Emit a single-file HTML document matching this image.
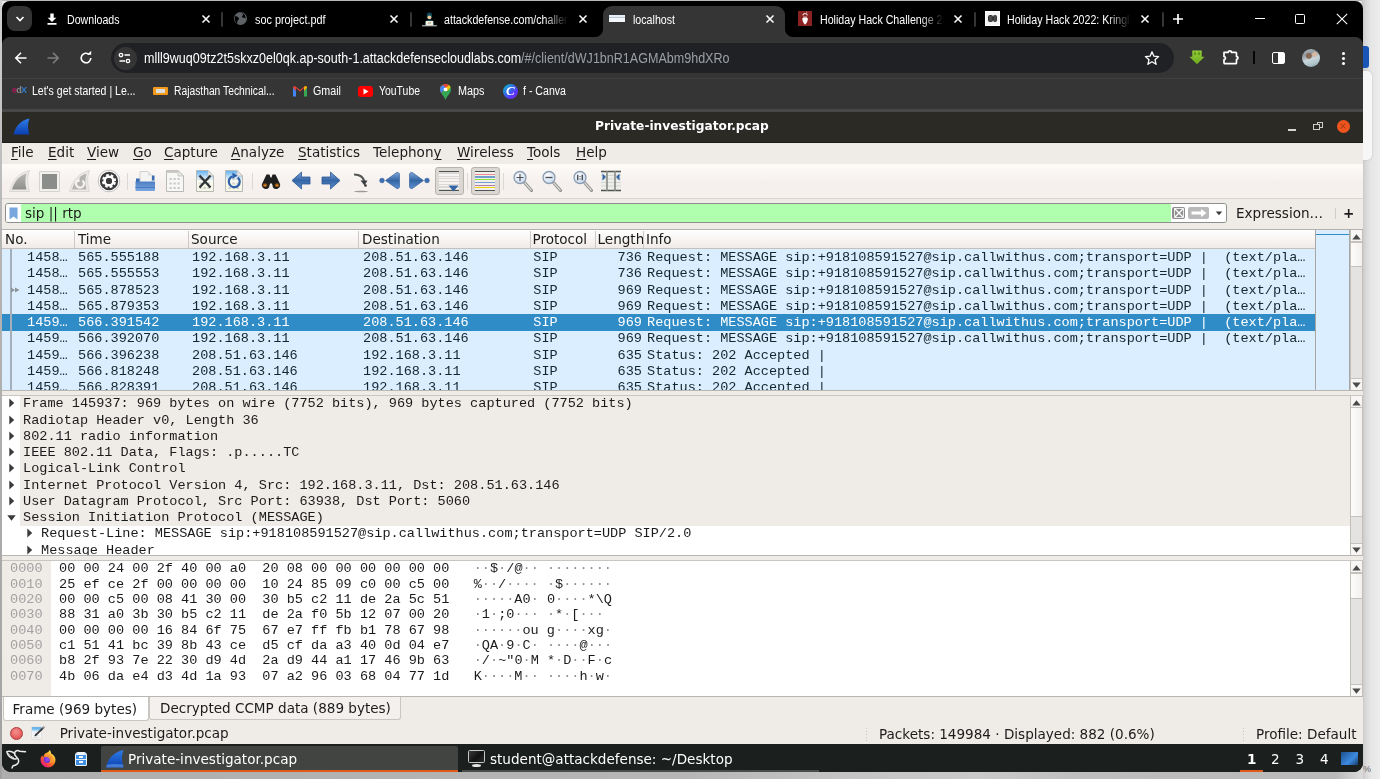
<!DOCTYPE html><html><head><meta charset="utf-8"><title>Private-investigator.pcap</title><style>
*{box-sizing:border-box;margin:0;padding:0}
html,body{width:1380px;height:779px;overflow:hidden}
body{background:#e9e9e9;font-family:"Liberation Sans",sans-serif;position:relative}
.a{position:absolute}
.t{position:absolute;white-space:pre;line-height:1}
#win{will-change:transform;left:2px;top:1px;width:1361px;height:771px;background:#000;border-radius:8px 8px 9px 9px;overflow:hidden}
.ct{font-family:"Liberation Sans",sans-serif;font-size:12px;color:#fff}
.dv{font-family:"DejaVu Sans",sans-serif;color:#1b1b1b}
.mono{font-family:"Liberation Mono",monospace;font-size:13.56px}
u{text-decoration:underline;text-underline-offset:2px;text-decoration-thickness:1px}
</style></head><body>
<div class="a" style="left:0;top:0;width:1380px;height:1px;background:#b9b9b9"></div>
<div class="a" style="left:1362px;top:0;width:18px;height:779px;background:linear-gradient(90deg,#c6c6c6 0,#d9d9d9 4px,#e6e6e6 9px,#ececec 18px)"></div>
<div class="a" style="left:1362px;top:46px;width:7px;height:22px;background:#1a56b8;border-radius:0 3px 3px 0"></div>
<div class="a" style="left:1362px;top:71px;width:10px;height:89px;background:#f7f7f7;border-radius:0 5px 5px 0;box-shadow:0 0 2px #bbb"></div>
<div class="a" style="left:0;top:760px;width:1363px;height:19px;background:linear-gradient(90deg,#aeaeae 0,#b6b6b6 50%,#c4c4c4 62%,#c9c9c9 72%,#bdbdbd 80%,#b9b9b9 98%,#dcdcdc 100%)"></div>
<div class="t" style="left:1363px;top:765px;font-size:9px;color:#6a6a6a">%</div>
<div class="a" style="left:0;top:0;width:2px;height:779px;background:linear-gradient(180deg,#d2d2d2,#b5b5b5 30%,#a2a2a2)"></div>
<div class="a" id="win">
<div class="a" style="left:0px;top:36px;width:1361px;height:72px;background:#353535"></div>
<div class="a" style="left:601px;top:5px;width:182px;height:32px;background:#353535;border-radius:9px 9px 0 0"></div>
<div class="a" style="left:593px;top:28px;width:8px;height:8px;background:radial-gradient(circle at 0 0,#000 7.5px,#353535 8.5px)"></div>
<div class="a" style="left:783px;top:28px;width:8px;height:8px;background:radial-gradient(circle at 100% 0,#000 7.5px,#353535 8.5px)"></div>
<div class="a" style="left:1353px;top:36px;width:8px;height:8px;background:radial-gradient(circle at 0 100%,#353535 7.5px,#000 8.5px)"></div>
<div class="a" style="left:0px;top:36px;width:8px;height:8px;background:radial-gradient(circle at 100% 100%,#353535 7.5px,#000 8.5px)"></div>
<div class="a" style="left:5.4px;top:5.2px;width:24.6px;height:24.6px;background:#343434;border-radius:8px"></div>
<svg class="a" style="left:12px;top:13px" width="12" height="10" viewBox="0 0 12 10"><path d="M2.5 3 L6 6.5 L9.5 3" fill="none" stroke="#fff" stroke-width="1.6"/></svg>
<svg class="a" style="left:44px;top:11px" width="12" height="14" viewBox="0 0 12 14"><path d="M4.3 1.5h3.4v4.2h2.6L6 10 1.7 5.7h2.6z M1.5 11h9v1.8h-9z" fill="#fff"/></svg>
<div class="t ct" style="left:64.5px;top:12.6px;transform:scaleX(0.8842);transform-origin:0 0;">Downloads</div>
<svg class="a" style="left:199px;top:13px" width="10" height="10" viewBox="0 0 10 10"><path d="M1.5 1.5 L8.5 8.5 M8.5 1.5 L1.5 8.5" stroke="#fff" stroke-width="1.5" fill="none"/></svg>
<div class="a" style="left:219.3px;top:11px;width:2px;height:14.5px;background:#353535;border-radius:1px"></div>
<svg class="a" style="left:231px;top:10px" width="15" height="15" viewBox="0 0 15 15"><circle cx="7.5" cy="7.5" r="6.500" fill="#5f6368"/><path d="M2 5.5c1.5-.5 2.5.3 3.5 1.2s.2 2.3-.8 2.8.3 2.5-.6 3.2C2.500 11.500 1.300 8.500 2 5.500zM7 1.500c1 .8 2.600.5 3 1.800s-1.500 1.500-1 2.700 2.800.4 3.600 1.500c.3-2.800-2-6-5.600-6z" fill="#000"/></svg>
<div class="t ct" style="left:253px;top:12.6px;transform:scaleX(0.9033);transform-origin:0 0;">soc project.pdf</div>
<svg class="a" style="left:387px;top:13px" width="10" height="10" viewBox="0 0 10 10"><path d="M1.5 1.5 L8.5 8.5 M8.5 1.5 L1.5 8.5" stroke="#fff" stroke-width="1.5" fill="none"/></svg>
<div class="a" style="left:408.3px;top:11px;width:2px;height:14.5px;background:#353535;border-radius:1px"></div>
<svg class="a" style="left:419px;top:10px" width="17" height="16" viewBox="0 0 17 16"><path d="M3.800 14.500c0-4 1.500-6 4.700-6s4.700 2 4.700 6z" fill="#0e3f50"/><ellipse cx="8.400" cy="4.800" rx="2.700" ry="3.200" fill="#0e4a5c"/><circle cx="8.400" cy="6.300" r="1.900" fill="#f2c796"/><rect x="4.700" y="10" width="7.500" height="4.600" fill="#f6f1dd"/><rect x="7" y="11.500" width="3" height="1" fill="#9a9a8a"/><rect x="1" y="14.300" width="14.800" height="1" fill="#cfd2d4"/></svg>
<div class="a" style="left:441.5px;top:12.6px;width:127px;height:14px;overflow:hidden;-webkit-mask-image:linear-gradient(90deg,#000 100px,transparent 124px);mask-image:linear-gradient(90deg,#000 100px,transparent 124px)"><div class="t ct" style="left:0;top:0;transform:scaleX(.887);transform-origin:0 0">attackdefense.com/challenge</div></div>
<svg class="a" style="left:576px;top:13px" width="10" height="10" viewBox="0 0 10 10"><path d="M1.5 1.5 L8.5 8.5 M8.5 1.5 L1.5 8.5" stroke="#fff" stroke-width="1.5" fill="none"/></svg>
<div class="a" style="left:607px;top:14px;width:16px;height:7px;background:linear-gradient(180deg,#e8eef5 0 2px,#b9c7d6 2px 3px,#f4f7fa 3px)"></div>
<div class="t ct" style="left:630.5px;top:12.6px;transform:scaleX(0.8865);transform-origin:0 0;">localhost</div>
<svg class="a" style="left:763px;top:13px" width="10" height="10" viewBox="0 0 10 10"><path d="M1.5 1.5 L8.5 8.5 M8.5 1.5 L1.5 8.5" stroke="#fff" stroke-width="1.5" fill="none"/></svg>
<div class="a" style="left:796px;top:10.4px;width:14.2px;height:14.6px;background:#8a2222"></div>
<svg class="a" style="left:796px;top:10.4px" width="14.2" height="14.6" viewBox="0 0 14 15"><path d="M4.200 8c0-.8 1.300-1.200 2.800-1.200s2.800.4 2.800 1.200c0 2.600-1.300 4.800-2.800 6.200-1.500-1.400-2.800-3.600-2.800-6.200z" fill="#fff"/><path d="M4.600 4.600c.3-1.300 1.200-2 2.400-2s2.100.7 2.400 2" stroke="#f1dcdc" stroke-width="1.100" fill="none"/><path d="M5 6.200h4" stroke="#e8cfcf" stroke-width=".9"/><circle cx="8.600" cy="1" r=".6" fill="#e8cfcf"/></svg>
<div class="a" style="left:817.5px;top:12.6px;width:127px;height:14px;overflow:hidden;-webkit-mask-image:linear-gradient(90deg,#000 100px,transparent 124px);mask-image:linear-gradient(90deg,#000 100px,transparent 124px)"><div class="t ct" style="left:0;top:0;transform:scaleX(.887);transform-origin:0 0">Holiday Hack Challenge 2022</div></div>
<svg class="a" style="left:951px;top:13px" width="10" height="10" viewBox="0 0 10 10"><path d="M1.5 1.5 L8.5 8.5 M8.5 1.5 L1.5 8.5" stroke="#fff" stroke-width="1.5" fill="none"/></svg>
<div class="a" style="left:972.3px;top:11px;width:2px;height:14.5px;background:#353535;border-radius:1px"></div>
<div class="a" style="left:983.2px;top:10.2px;width:15px;height:15px;background:#f4f4f4;border:1px solid #fff"></div>
<div class="a" style="left:986px;top:14px;width:4.6px;height:6.5px;background:#4a4a4a;border-radius:1.500px;border:1px solid #333"></div>
<div class="a" style="left:990.5px;top:14px;width:4.6px;height:6.5px;background:#4a4a4a;border-radius:1.500px;border:1px solid #333"></div>
<div class="a" style="left:1005px;top:12.6px;width:127px;height:14px;overflow:hidden;-webkit-mask-image:linear-gradient(90deg,#000 100px,transparent 124px);mask-image:linear-gradient(90deg,#000 100px,transparent 124px)"><div class="t ct" style="left:0;top:0;transform:scaleX(.887);transform-origin:0 0">Holiday Hack 2022: KringleCon</div></div>
<svg class="a" style="left:1138px;top:13px" width="10" height="10" viewBox="0 0 10 10"><path d="M1.5 1.5 L8.5 8.5 M8.5 1.5 L1.5 8.5" stroke="#fff" stroke-width="1.5" fill="none"/></svg>
<div class="a" style="left:1160.3px;top:11px;width:2px;height:14.5px;background:#353535;border-radius:1px"></div>
<svg class="a" style="left:1170px;top:12px" width="12" height="12" viewBox="0 0 12 12"><path d="M6 1v10M1 6h10" stroke="#fff" stroke-width="1.7"/></svg>
<div class="a" style="left:1253px;top:17px;width:10px;height:1px;background:#fff"></div>
<div class="a" style="left:1293px;top:13px;width:10px;height:10px;border:1px solid #fff;border-radius:1.5px"></div>
<svg class="a" style="left:1334px;top:12px" width="12" height="12" viewBox="0 0 12 12"><path d="M.8.8 11.200 11.200M11.200.8.8 11.200" stroke="#fff" stroke-width="1.100"/></svg>
<svg class="a" style="left:12px;top:50px" width="14" height="14" viewBox="0 0 14 14"><path d="M12.500 7H2M7 1.800 1.800 7 7 12.200" stroke="#fff" stroke-width="1.600" fill="none"/></svg>
<svg class="a" style="left:44px;top:50px" width="14" height="14" viewBox="0 0 14 14"><path d="M1.500 7H12M7 1.800 12.200 7 7 12.200" stroke="#7d7d7d" stroke-width="1.600" fill="none"/></svg>
<svg class="a" style="left:77px;top:50px" width="14" height="14" viewBox="0 0 14 14"><path d="M11.800 7A4.800 4.800 0 1 1 10.300 3.500" stroke="#fff" stroke-width="1.600" fill="none"/><path d="M8 3.800h4.200V-.2z" fill="#fff"/></svg>
<div class="a" style="left:108.5px;top:42px;width:1063px;height:30px;background:#202124;border-radius:15px"></div>
<div class="a" style="left:111.5px;top:45.5px;width:23px;height:23px;background:#353535;border-radius:12px"></div>
<svg class="a" style="left:116px;top:51px" width="14" height="12" viewBox="0 0 14 12"><circle cx="3" cy="3" r="1.700" fill="none" stroke="#fff" stroke-width="1.300"/><path d="M6.500 3H12" stroke="#fff" stroke-width="1.400"/><circle cx="10" cy="9" r="1.700" fill="none" stroke="#fff" stroke-width="1.300"/><path d="M1.500 9H7" stroke="#fff" stroke-width="1.400"/></svg>
<div class="t ct" style="left:141.5px;top:49.6px;font-size:14px;transform:scaleX(0.8957);transform-origin:0 0;">mlll9wuq09tz2t5skxz0el0qk.ap-south-1.attackdefensecloudlabs.com<span style="color:#9aa0a6">/#/client/dWJ1bnR1AGMAbm9hdXRo</span></div>
<svg class="a" style="left:1142px;top:49px" width="16" height="16" viewBox="0 0 16 16"><path d="M8 1.800 9.900 6.200 14.600 6.600 11 9.700 12.100 14.300 8 11.800 3.900 14.300 5 9.700 1.400 6.600 6.100 6.200z" fill="none" stroke="#fff" stroke-width="1.300" stroke-linejoin="round"/></svg>
<svg class="a" style="left:1187px;top:49px" width="16" height="15" viewBox="0 0 16 15"><defs><linearGradient id="gdl" x1="0" y1="0" x2="0" y2="1"><stop offset="0" stop-color="#9bd23c"/><stop offset="1" stop-color="#6aa81c"/></linearGradient></defs><path d="M3.300 .5h9.400v6.300h2.800L8 14.300 .5 6.800h2.800z" fill="url(#gdl)"/><path d="M5.200 1.800h1.600v1.600h1L6 5.400 4.200 3.400h1zM9.200 1.800h1.600v1.600h1L10 5.400 8.200 3.400h1z" fill="#4f8a10" opacity=".8"/></svg>
<svg class="a" style="left:1219px;top:47px" width="19" height="18" viewBox="0 0 19 18"><path d="M3 4.300h4.300c-.3-1.800 3.400-1.800 3.100 0H14.500a1 1 0 0 1 1 1v3.300c1.900-.3 1.900 3 0 2.700v3.400a1 1 0 0 1-1 1H4a1 1 0 0 1-1-1v-3.200c1.900.3 1.900-3.100 0-2.800z" fill="none" stroke="#fff" stroke-width="1.700" stroke-linejoin="round"/></svg>
<div class="a" style="left:1250.6px;top:50px;width:2px;height:13px;background:#050505"></div>
<div class="a" style="left:1269.7px;top:50.5px;width:13.5px;height:12.7px;border:1.500px solid #fff;border-radius:2px;background:linear-gradient(90deg,transparent 0 5.200px,#fff 5.200px)"></div>
<div class="a" style="left:1300px;top:48px;width:18px;height:18px;border-radius:9px;background:radial-gradient(circle at 38% 38%,#8a6a55 0 2.500px,transparent 3.500px),radial-gradient(circle at 70% 30%,#d8b8a0 0 2px,transparent 3px),linear-gradient(160deg,#b9c3c9 0,#8f9aa0 30%,#c9d6dc 55%,#a7c0c4 80%,#6f8286 100%)"></div>
<div class="a" style="left:1339.5px;top:50.7px;width:3px;height:3px;background:#fff;border-radius:50%"></div>
<div class="a" style="left:1339.5px;top:55.7px;width:3px;height:3px;background:#fff;border-radius:50%"></div>
<div class="a" style="left:1339.5px;top:60.7px;width:3px;height:3px;background:#fff;border-radius:50%"></div>
<div class="a" style="left:0px;top:77px;width:1361px;height:1px;background:#404040"></div>
<div class="t ct" style="left:10px;top:85px;font-size:9px;font-weight:bold;letter-spacing:-0.8px"><span style="color:#b0155a">e</span><span style="color:#8a8a8a">d</span><span style="color:#2d7fd3">X</span></div>
<div class="t ct" style="left:30px;top:83.5px;transform:scaleX(0.8760);transform-origin:0 0;">Let's get started | Le...</div>
<div class="a" style="left:151px;top:86px;width:15px;height:8px;background:#f39a1d;border-radius:1px"></div>
<div class="a" style="left:154px;top:88px;width:9px;height:4px;background:#ddd"></div>
<div class="t ct" style="left:171.5px;top:83.5px;transform:scaleX(0.8576);transform-origin:0 0;">Rajasthan Technical...</div>
<svg class="a" style="left:291px;top:85px" width="14" height="11" viewBox="0 0 14 11"><path d="M0 1.500v9h3V5L0 1.500z" fill="#4285f4"/><path d="M14 1.500v9h-3V5z" fill="#34a853"/><path d="M0 1.500 3 5V2L7 5.500 11 2v3l3-3.500C14 .3 12.500-.3 11.500.5L7 4 2.500.5C1.500-.3 0 .3 0 1.500z" fill="#ea4335"/><path d="M11 2v3l3-3.500c0-1.200-1.500-1.800-2.500-1z" fill="#fbbc04"/></svg>
<div class="t ct" style="left:310.5px;top:83.5px;transform:scaleX(0.8933);transform-origin:0 0;">Gmail</div>
<div class="a" style="left:356px;top:85px;width:15px;height:11px;background:#f00;border-radius:3px"></div>
<svg class="a" style="left:361px;top:87px" width="6" height="7" viewBox="0 0 6 7"><path d="M.5.500 5.500 3.500.5 6.500z" fill="#fff"/></svg>
<div class="t ct" style="left:376.5px;top:83.5px;transform:scaleX(0.8694);transform-origin:0 0;">YouTube</div>
<svg class="a" style="left:438px;top:83px" width="11" height="16" viewBox="0 0 11 16"><path d="M5.500 0C2.500 0 0 2.400 0 5.400c0 3.800 4 6 5.500 10.600C7 11.400 11 9.200 11 5.400 11 2.400 8.500 0 5.500 0z" fill="#34a853"/><path d="M5.500 0C2.500 0 0 2.400 0 5.400c0 1.300.5 2.400 1.200 3.400L8.800 1A5.500 5.500 0 0 0 5.500 0z" fill="#ea4335"/><path d="M1.200 8.800 5.500 4.200 3.500 1 .9 2.600C.3 3.400 0 4.400 0 5.400c0 1.300.5 2.400 1.200 3.400z" fill="#4285f4"/><path d="M8.800 1 5.500 4.300l2 2.700 3-3.600C10.300 2.400 9.700 1.600 8.800 1z" fill="#fbbc04"/><circle cx="5.500" cy="5.400" r="1.900" fill="#fff"/></svg>
<div class="t ct" style="left:455.5px;top:83.5px;transform:scaleX(0.9031);transform-origin:0 0;">Maps</div>
<div class="a" style="left:501px;top:83px;width:15px;height:15px;border-radius:8px;background:linear-gradient(135deg,#00c4cc,#5a32fa 70%,#7d2ae8)"></div>
<div class="t ct" style="left:504px;top:83px;font-family:Liberation Serif,serif;font-style:italic;font-size:13px;font-weight:bold">C</div>
<div class="t ct" style="left:520.5px;top:83.5px;transform:scaleX(0.8832);transform-origin:0 0;">f - Canva</div>
<div class="a" style="left:0px;top:108px;width:1361px;height:3px;background:#484848"></div>
<div class="a" style="left:0px;top:111px;width:1361px;height:31px;background:#2b2a25;border-bottom:1px solid #1b1b18"></div>
<svg class="a" style="left:10px;top:116px" width="20" height="20" viewBox="0 0 20 20"><defs><linearGradient id="fin" x1="0" y1="0" x2="0" y2="1"><stop offset="0" stop-color="#2f7de8"/><stop offset="1" stop-color="#0a3fb0"/></linearGradient></defs><path d="M1.500 17.500C3.500 9 9 3 17.500 1.500 15.500 6 15.500 12 17.500 17.500z" fill="url(#fin)"/></svg>
<div class="t dv" style="left:593px;top:119px;font-weight:bold;font-size:12.2px;color:#fff">Private-investigator.pcap</div>
<div class="a" style="left:1286px;top:128.2px;width:7.5px;height:1.5px;background:#d6d6ce"></div>
<div class="a" style="left:1314.5px;top:120.8px;width:6.2px;height:6px;border:1.200px solid #cfcfc7"></div>
<div class="a" style="left:1311px;top:123px;width:7px;height:6.3px;border:1.200px solid #cfcfc7;background:#2b2a25"></div>
<div class="a" style="left:1335px;top:118.5px;width:13px;height:13px;background:#f0541e;border-radius:7px"></div>
<svg class="a" style="left:1338px;top:122px" width="6" height="6" viewBox="0 0 6 6"><path d="M.7.700 5.300 5.300M5.300.7.700 5.300" stroke="#b3400f" stroke-width="1.100"/></svg>
<div class="a" style="left:0px;top:142px;width:1361px;height:21px;background:#efebe7"></div>
<div class="t dv" style="left:9px;top:145.3px;font-size:13.56px"><u>F</u>ile</div>
<div class="t dv" style="left:46px;top:145.3px;font-size:13.56px"><u>E</u>dit</div>
<div class="t dv" style="left:85px;top:145.3px;font-size:13.56px"><u>V</u>iew</div>
<div class="t dv" style="left:131px;top:145.3px;font-size:13.56px"><u>G</u>o</div>
<div class="t dv" style="left:162px;top:145.3px;font-size:13.56px"><u>C</u>apture</div>
<div class="t dv" style="left:229px;top:145.3px;font-size:13.56px"><u>A</u>nalyze</div>
<div class="t dv" style="left:296px;top:145.3px;font-size:13.56px"><u>S</u>tatistics</div>
<div class="t dv" style="left:371px;top:145.3px;font-size:13.56px">Telephon<u>y</u></div>
<div class="t dv" style="left:455px;top:145.3px;font-size:13.56px"><u>W</u>ireless</div>
<div class="t dv" style="left:525px;top:145.3px;font-size:13.56px"><u>T</u>ools</div>
<div class="t dv" style="left:574px;top:145.3px;font-size:13.56px"><u>H</u>elp</div>
<div class="a" style="left:0px;top:162.8px;width:1361px;height:34.5px;background:linear-gradient(180deg,#fdfaf8 0,#f7f3f0 45%,#f5efee 55%,#f6f0ef 100%)"></div>
<div class="a" style="left:0px;top:197px;width:1361px;height:1px;background:#d9d5d1"></div>
<div class="a" style="left:0px;top:198px;width:1361px;height:30px;background:#efebe7"></div>
<svg class="a" width="0" height="0"><defs><linearGradient id="gfin" x1="0" y1="0" x2="0" y2="1"><stop offset="0" stop-color="#b9b8b5"/><stop offset="1" stop-color="#8e8e8b"/></linearGradient><linearGradient id="gblue" x1="0" y1="0" x2="0" y2="1"><stop offset="0" stop-color="#7fa6d8"/><stop offset=".5" stop-color="#3465a4"/><stop offset="1" stop-color="#5e8fd0"/></linearGradient><linearGradient id="gfold" x1="0" y1="0" x2="0" y2="1"><stop offset="0" stop-color="#4d7ec4"/><stop offset="1" stop-color="#7aa5e0"/></linearGradient><linearGradient id="gdoc" x1="0" y1="0" x2="0" y2="1"><stop offset="0" stop-color="#5fb0f0"/><stop offset=".35" stop-color="#cfe6f8"/><stop offset=".5" stop-color="#fbfbf0"/><stop offset="1" stop-color="#f6f6e6"/></linearGradient><radialGradient id="glens" cx=".4" cy=".35" r=".7"><stop offset="0" stop-color="#fff"/><stop offset="1" stop-color="#c5d8ee"/></radialGradient></defs></svg>
<svg class="a" style="left:6px;top:168px" width="23" height="24" viewBox="0 0 23 24"><path d="M1.500 22.500C4.500 11 11 4 21.500 1.500 19 8 19 15 21.500 22.500z" fill="#ece9e6" stroke="#dbd8d4" stroke-width="1"/><path d="M4 20.500C6.500 12 11.500 6.500 18.500 4.500 17 10 17 15 18.500 20.500z" fill="url(#gfin)"/></svg>
<div class="a" style="left:37px;top:170px;width:21px;height:21px;background:#f3f1ee;border:1px solid #d6d3cf;border-radius:1px"></div>
<div class="a" style="left:40px;top:173px;width:15px;height:15px;background:#8b8d8a"></div>
<svg class="a" style="left:66px;top:168px" width="23" height="24" viewBox="0 0 23 24"><path d="M1.500 22.500C4.500 11 11 4 21.500 1.500 19 8 19 15 21.500 22.500z" fill="#ece9e6" stroke="#dbd8d4" stroke-width="1"/><path d="M4 20.500C6.500 12 11.500 6.500 18.500 4.500 17 10 17 15 18.500 20.500z" fill="#b5b4b0"/><path d="M14.500 11.500A4 4 0 1 1 10 11.200" fill="none" stroke="#f4f3f1" stroke-width="2.200"/><path d="M11.500 8v5h-4z" fill="#f4f3f1"/></svg>
<svg class="a" style="left:95px;top:168px" width="24" height="24" viewBox="0 0 24 24"><circle cx="12" cy="12" r="10.800" fill="#fdfdfd" stroke="#c2c2c2" stroke-width="1"/><circle cx="12" cy="12" r="9.200" fill="#3c3c3c"/><circle cx="12" cy="12" r="6" fill="none" stroke="#fff" stroke-width="2.200" stroke-dasharray="2.600 2.112" transform="rotate(11 12 12)"/><circle cx="12" cy="12" r="4.300" fill="none" stroke="#fff" stroke-width="2.600"/><circle cx="12" cy="12" r="3" fill="#3a3a3a"/></svg>
<div class="a" style="left:125px;top:172px;width:1px;height:17px;background:#dcd8d5"></div>
<svg class="a" style="left:132px;top:169px" width="22" height="22" viewBox="0 0 22 22"><path d="M2 8.500h5l1-1.500h4v13H2z" fill="#3b6cb3"/><path d="M6 1.500h8l4 4V14H6z" fill="#f4f4f4" stroke="#c9c9c9" stroke-width=".8"/><path d="M14 1.500v4h4z" fill="#dcdcdc"/><path d="M18 5.500h2.500v5H18z" fill="#3b6cb3"/><path d="M1.500 11.500h19.500v8.500a1 1 0 0 1-1 1h-17.500a1 1 0 0 1-1-1z" fill="url(#gfold)"/><path d="M1.500 17.500h19.500" stroke="#4a7bc0" stroke-width="1"/></svg>
<svg class="a" style="left:163px;top:168px" width="20" height="24" viewBox="0 0 20 24"><path d="M1.500 1.500h11.500l5.500 5.500v15.500h-17z" fill="#f7f7f5" stroke="#b9b9b5" stroke-width="1"/><path d="M13 1.500v5.500h5.500z" fill="#e9e9e9" stroke="#b9b9b5" stroke-width=".7"/><path d="M1.500 1.500h11.500v2.500h-11.500z" fill="#c9c9c7"/><path d="M4.500 10h11M4.500 14.500h11M4.500 19h11" stroke="#c9c9c9" stroke-width="2.200" stroke-dasharray="2.200 1.800"/></svg>
<svg class="a" style="left:193px;top:168px" width="20" height="24" viewBox="0 0 20 24"><path d="M1.500 1.500h11.500l5.500 5.500v15.500h-17z" fill="url(#gdoc)" stroke="#b9b9b5" stroke-width="1"/><path d="M13 1.500v5.500h5.500z" fill="#e9e9e9" stroke="#b9b9b5" stroke-width=".7"/><path d="M4.500 10h11M4.500 14.500h11M4.500 19h11" stroke="#c9c9c9" stroke-width="2.200" stroke-dasharray="2.200 1.800"/><path d="M4.500 6.500 15.500 18.500M15.500 6.500 4.500 18.500" stroke="#2e3436" stroke-width="2.300"/></svg>
<svg class="a" style="left:222px;top:168px" width="20" height="24" viewBox="0 0 20 24"><path d="M1.500 1.500h11.500l5.500 5.500v15.500h-17z" fill="url(#gdoc)" stroke="#b9b9b5" stroke-width="1"/><path d="M13 1.500v5.500h5.500z" fill="#e9e9e9" stroke="#b9b9b5" stroke-width=".7"/><path d="M4.500 10h11M4.500 14.500h11M4.500 19h11" stroke="#c9c9c9" stroke-width="2.200" stroke-dasharray="2.200 1.800"/><path d="M13.800 8.500A5.500 5.500 0 1 1 8.200 7.600" fill="none" stroke="#2f5fa6" stroke-width="2.200"/><path d="M8.500 3.500 13.500 6.800 8.200 9.800z" fill="#2f5fa6"/></svg>
<div class="a" style="left:250px;top:172px;width:1px;height:17px;background:#dcd8d5"></div>
<svg class="a" style="left:257px;top:172px" width="24" height="17" viewBox="0 0 24 17"><path d="M7.500 1.500h3l1 3h1l1-3h3l4.500 9.500a4 4 0 0 1-7 3.500l-1-4h-2l-1 4a4 4 0 0 1-7-3.500z" fill="#1f1f1f"/><ellipse cx="6" cy="12.200" rx="2.300" ry="1.900" fill="#8f4e12"/><ellipse cx="18" cy="12.200" rx="2.300" ry="1.900" fill="#8f4e12"/><ellipse cx="6" cy="12.400" rx="1.100" ry=".8" fill="#d98c3a"/><ellipse cx="18" cy="12.400" rx="1.100" ry=".8" fill="#d98c3a"/></svg>
<svg class="a" style="left:289px;top:170px" width="20" height="19" viewBox="0 0 20 19"><path d="M1 9.500 10.500 1v5h8.500v7h-8.500v5z" fill="url(#gblue)" stroke="#2a5796" stroke-width=".8" stroke-linejoin="round"/></svg>
<svg class="a" style="left:319px;top:170px" width="20" height="19" viewBox="0 0 20 19"><path d="M19 9.500 9.500 1v5H1v7h8.500v5z" fill="url(#gblue)" stroke="#2a5796" stroke-width=".8" stroke-linejoin="round"/></svg>
<svg class="a" style="left:350px;top:171px" width="18" height="21" viewBox="0 0 18 21"><path d="M2 2.500c6 0 9.500 2.500 10.500 7.500" fill="none" stroke="#555753" stroke-width="2.200"/><path d="M8.500 8.500h7l-3 5z" fill="#3d4042"/><circle cx="13.500" cy="13.500" r="1.300" fill="#2e3436"/><ellipse cx="9" cy="19.500" rx="7" ry=".8" fill="#9c9a97"/></svg>
<svg class="a" style="left:377px;top:170px" width="22" height="19" viewBox="0 0 22 19"><circle cx="3" cy="9.500" r="2.300" fill="#3f70b5" stroke="#2a5796" stroke-width=".6"/><path d="M6.500 9.500 18 1.300c1.500 0 2.500 1 2.500 2v12.400c0 1-1 2-2.500 2z" fill="url(#gblue)" stroke="#2a5796" stroke-width=".6"/></svg>
<svg class="a" style="left:406px;top:170px" width="22" height="19" viewBox="0 0 22 19"><circle cx="19" cy="9.500" r="2.300" fill="#3f70b5" stroke="#2a5796" stroke-width=".6"/><path d="M15.500 9.500 4 1.300c-1.500 0-2.500 1-2.500 2v12.400c0 1 1 2 2.500 2z" fill="url(#gblue)" stroke="#2a5796" stroke-width=".6"/></svg>
<div class="a" style="left:433px;top:166px;width:29px;height:28px;background:#dbd8d3;border:1px solid #b7b3ae;border-radius:3px"></div>
<div class="a" style="left:437px;top:173px;width:20px;height:1.6px;background:#f6f5f3"></div>
<div class="a" style="left:437px;top:175.7px;width:20px;height:1.6px;background:#f6f5f3"></div>
<div class="a" style="left:437px;top:178.4px;width:20px;height:1.6px;background:#f6f5f3"></div>
<div class="a" style="left:437px;top:181.1px;width:20px;height:1.6px;background:#f6f5f3"></div>
<div class="a" style="left:437px;top:183.8px;width:20px;height:1.6px;background:#f6f5f3"></div>
<div class="a" style="left:437px;top:186.5px;width:20px;height:1.6px;background:#f6f5f3"></div>
<div class="a" style="left:437px;top:170px;width:20px;height:1.2px;background:#4f5552"></div>
<div class="a" style="left:437px;top:189px;width:20px;height:1.2px;background:#4f5552"></div>
<svg class="a" style="left:446px;top:184px" width="11" height="7" viewBox="0 0 11 7"><path d="M.5.500h10L5.500 6.500z" fill="#3465a4"/></svg>
<div class="a" style="left:465px;top:172px;width:1px;height:17px;background:#dcd8d5"></div>
<div class="a" style="left:469px;top:166px;width:29px;height:28px;background:#dbd8d3;border:1px solid #b7b3ae;border-radius:3px"></div>
<div class="a" style="left:473px;top:170px;width:20px;height:20px;background:#f1f0ed"></div>
<div class="a" style="left:473px;top:170px;width:20px;height:1.2px;background:#4f5552"></div>
<div class="a" style="left:473px;top:172.6px;width:20px;height:1.2px;background:#f08a8a"></div>
<div class="a" style="left:473px;top:175.4px;width:20px;height:1.2px;background:#729fcf"></div>
<div class="a" style="left:473px;top:178.1px;width:20px;height:1.2px;background:#8ae234"></div>
<div class="a" style="left:473px;top:180.8px;width:20px;height:1.2px;background:#729fcf"></div>
<div class="a" style="left:473px;top:183.5px;width:20px;height:1.2px;background:#ad7fa8"></div>
<div class="a" style="left:473px;top:186.2px;width:20px;height:1.2px;background:#edd400"></div>
<div class="a" style="left:473px;top:189px;width:20px;height:1.2px;background:#4f5552"></div>
<div class="a" style="left:501px;top:172px;width:1px;height:17px;background:#dcd8d5"></div>
<svg class="a" style="left:509.5px;top:168px" width="22" height="24" viewBox="0 0 22 24"><path d="M12.500 13.500 19.500 21.500" stroke="#8b8d8a" stroke-width="3" stroke-linecap="round"/><path d="M12.800 13.800 19.200 21.200" stroke="#e3e3e0" stroke-width="1.200" stroke-linecap="round"/><circle cx="8" cy="8.500" r="6" fill="url(#glens)" stroke="#8d9bb0" stroke-width="1.300"/><path d="M4.500 8.500h7M8 5v7" stroke="#4a4f55" stroke-width="1.200"/></svg>
<svg class="a" style="left:539px;top:168px" width="22" height="24" viewBox="0 0 22 24"><path d="M12.500 13.500 19.500 21.500" stroke="#8b8d8a" stroke-width="3" stroke-linecap="round"/><path d="M12.800 13.800 19.200 21.200" stroke="#e3e3e0" stroke-width="1.200" stroke-linecap="round"/><circle cx="8" cy="8.500" r="6" fill="url(#glens)" stroke="#8d9bb0" stroke-width="1.300"/><path d="M4.500 8.500h7" stroke="#4a4f55" stroke-width="1.300"/></svg>
<svg class="a" style="left:569.5px;top:168px" width="22" height="24" viewBox="0 0 22 24"><path d="M12.500 13.500 19.500 21.500" stroke="#8b8d8a" stroke-width="3" stroke-linecap="round"/><path d="M12.800 13.800 19.200 21.200" stroke="#e3e3e0" stroke-width="1.200" stroke-linecap="round"/><circle cx="8" cy="8.500" r="6" fill="url(#glens)" stroke="#8d9bb0" stroke-width="1.300"/><path d="M5.700 5.800v5.400M10.300 5.800v5.400" stroke="#4a4f55" stroke-width="1.400"/><path d="M8 7.300v.1M8 9.800v.1" stroke="#4a4f55" stroke-width="1.200" stroke-linecap="round"/></svg>
<svg class="a" style="left:598px;top:169px" width="22" height="22" viewBox="0 0 22 22"><rect x="1" y="1" width="20" height="20" fill="#eeeeec"/><path d="M1 5.500h20M1 9h20M1 12.500h20M1 16h20" stroke="#d3d7cf" stroke-width="1"/><path d="M1 1.500h20M1 20.500h20" stroke="#4f5552" stroke-width="1.400"/><path d="M7 1v20M15 1v20" stroke="#888a85" stroke-width="1.600"/><path d="M2.500 3.500 6 7 2.500 10.500zM19.500 3.500 16 7 19.500 10.500z" fill="#3465a4"/></svg>
<div class="a" style="left:3px;top:202px;width:1222px;height:20px;background:#afffaf;border:1px solid #8f8f8f;border-radius:3px"></div>
<div class="a" style="left:4px;top:203px;width:15px;height:18px;background:#fff;border-radius:2px 0 0 2px"></div>
<svg class="a" style="left:7px;top:206px" width="9" height="13" viewBox="0 0 9 13"><path d="M.5.500h8v12L4.500 9.500.5 12.500z" fill="#77a7dd"/></svg>
<div class="t dv" style="left:23px;top:205.7px;font-size:13.56px">sip || rtp</div>
<div class="a" style="left:1169px;top:203px;width:55px;height:18px;background:#fff;border-radius:0 2px 2px 0"></div>
<div class="a" style="left:1170px;top:206px;width:13px;height:12px;background:#8d8d8d;border-radius:2px"></div>
<svg class="a" style="left:1172px;top:207px" width="10" height="10" viewBox="0 0 10 10"><path d="M1 1 9 9M9 1 1 9" stroke="#fff" stroke-width="1.300"/><rect x=".5" y=".5" width="9" height="9" fill="none" stroke="#fff" stroke-width=".8"/></svg>
<div class="a" style="left:1186px;top:206px;width:21px;height:12px;background:#b9b9b9;border-radius:2px"></div>
<svg class="a" style="left:1188px;top:207px" width="18" height="10" viewBox="0 0 18 10"><path d="M1.500 3.500H11V1l5.500 4L11 9V6.500H1.500z" fill="#fff"/></svg>
<svg class="a" style="left:1213px;top:210px" width="8" height="5" viewBox="0 0 8 5"><path d="M.8.500h6.400L4 4.300z" fill="#3a3a3a"/></svg>
<div class="t dv" style="left:1234px;top:206.3px;font-size:13.56px">Expression…</div>
<div class="a" style="left:1333px;top:207px;width:1px;height:11px;background:#cfcbc7"></div>
<div class="t dv" style="left:1341px;top:206px;font-size:13.56px;font-weight:bold">+</div>
<div class="a" style="left:0px;top:228px;width:1361px;height:161px;background:#fff;border-top:1px solid #b4b0ab"></div>
<div class="a" style="left:0px;top:229px;width:1313px;height:19px;background:linear-gradient(180deg,#fff 0,#f7f3f1 60%,#efeae8 100%);border-bottom:1px solid #c4c0bc"></div>
<div class="t dv" style="left:3px;top:232px;font-size:13.56px">No.</div>
<div class="t dv" style="left:76px;top:232px;font-size:13.56px">Time</div>
<div class="t dv" style="left:189px;top:232px;font-size:13.56px">Source</div>
<div class="t dv" style="left:360px;top:232px;font-size:13.56px">Destination</div>
<div class="t dv" style="left:530.5px;top:232px;font-size:13.56px">Protocol</div>
<div class="t dv" style="left:595.5px;top:232px;font-size:13.56px">Length</div>
<div class="t dv" style="left:644px;top:232px;font-size:13.56px">Info</div>
<div class="a" style="left:72px;top:230px;width:1px;height:17px;background:linear-gradient(90deg,#cdc9c5,#cdc9c5)"></div>
<div class="a" style="left:186px;top:230px;width:1px;height:17px;background:linear-gradient(90deg,#cdc9c5,#cdc9c5)"></div>
<div class="a" style="left:356px;top:230px;width:1px;height:17px;background:linear-gradient(90deg,#cdc9c5,#cdc9c5)"></div>
<div class="a" style="left:527.5px;top:230px;width:1px;height:17px;background:linear-gradient(90deg,#cdc9c5,#cdc9c5)"></div>
<div class="a" style="left:593px;top:230px;width:1px;height:17px;background:linear-gradient(90deg,#cdc9c5,#cdc9c5)"></div>
<div class="a" style="left:641.3px;top:230px;width:1px;height:17px;background:linear-gradient(90deg,#cdc9c5,#cdc9c5)"></div>
<div class="a" style="left:0px;top:248.3px;width:1313px;height:140.7px;background:#daeeff;overflow:hidden">
<div class="t mono" style="left:25px;top:1.80px;color:#12272e">1458…</div>
<div class="t mono" style="left:76px;top:1.80px;color:#12272e">565.555188</div>
<div class="t mono" style="left:190px;top:1.80px;color:#12272e">192.168.3.11</div>
<div class="t mono" style="left:361px;top:1.80px;color:#12272e">208.51.63.146</div>
<div class="t mono" style="left:531.3px;top:1.80px;color:#12272e">SIP</div>
<div class="t mono" style="right:673px;top:1.80px;color:#12272e">736</div>
<div class="t mono" style="left:645px;top:1.80px;color:#12272e">Request: MESSAGE sip:+918108591527@sip.callwithus.com;transport=UDP |  (text/pla…</div>
<div class="t mono" style="left:25px;top:18.07px;color:#12272e">1458…</div>
<div class="t mono" style="left:76px;top:18.07px;color:#12272e">565.555553</div>
<div class="t mono" style="left:190px;top:18.07px;color:#12272e">192.168.3.11</div>
<div class="t mono" style="left:361px;top:18.07px;color:#12272e">208.51.63.146</div>
<div class="t mono" style="left:531.3px;top:18.07px;color:#12272e">SIP</div>
<div class="t mono" style="right:673px;top:18.07px;color:#12272e">736</div>
<div class="t mono" style="left:645px;top:18.07px;color:#12272e">Request: MESSAGE sip:+918108591527@sip.callwithus.com;transport=UDP |  (text/pla…</div>
<div class="t mono" style="left:25px;top:34.34px;color:#12272e">1458…</div>
<div class="t mono" style="left:76px;top:34.34px;color:#12272e">565.878523</div>
<div class="t mono" style="left:190px;top:34.34px;color:#12272e">192.168.3.11</div>
<div class="t mono" style="left:361px;top:34.34px;color:#12272e">208.51.63.146</div>
<div class="t mono" style="left:531.3px;top:34.34px;color:#12272e">SIP</div>
<div class="t mono" style="right:673px;top:34.34px;color:#12272e">969</div>
<div class="t mono" style="left:645px;top:34.34px;color:#12272e">Request: MESSAGE sip:+918108591527@sip.callwithus.com;transport=UDP |  (text/pla…</div>
<div class="t mono" style="left:25px;top:50.61px;color:#12272e">1458…</div>
<div class="t mono" style="left:76px;top:50.61px;color:#12272e">565.879353</div>
<div class="t mono" style="left:190px;top:50.61px;color:#12272e">192.168.3.11</div>
<div class="t mono" style="left:361px;top:50.61px;color:#12272e">208.51.63.146</div>
<div class="t mono" style="left:531.3px;top:50.61px;color:#12272e">SIP</div>
<div class="t mono" style="right:673px;top:50.61px;color:#12272e">969</div>
<div class="t mono" style="left:645px;top:50.61px;color:#12272e">Request: MESSAGE sip:+918108591527@sip.callwithus.com;transport=UDP |  (text/pla…</div>
<div class="a" style="left:0;top:65.08px;width:1313px;height:16.27px;background:#308cc6"></div>
<div class="t mono" style="left:25px;top:66.88px;color:#fff">1459…</div>
<div class="t mono" style="left:76px;top:66.88px;color:#fff">566.391542</div>
<div class="t mono" style="left:190px;top:66.88px;color:#fff">192.168.3.11</div>
<div class="t mono" style="left:361px;top:66.88px;color:#fff">208.51.63.146</div>
<div class="t mono" style="left:531.3px;top:66.88px;color:#fff">SIP</div>
<div class="t mono" style="right:673px;top:66.88px;color:#fff">969</div>
<div class="t mono" style="left:645px;top:66.88px;color:#fff">Request: MESSAGE sip:+918108591527@sip.callwithus.com;transport=UDP |  (text/pla…</div>
<div class="t mono" style="left:25px;top:83.15px;color:#12272e">1459…</div>
<div class="t mono" style="left:76px;top:83.15px;color:#12272e">566.392070</div>
<div class="t mono" style="left:190px;top:83.15px;color:#12272e">192.168.3.11</div>
<div class="t mono" style="left:361px;top:83.15px;color:#12272e">208.51.63.146</div>
<div class="t mono" style="left:531.3px;top:83.15px;color:#12272e">SIP</div>
<div class="t mono" style="right:673px;top:83.15px;color:#12272e">969</div>
<div class="t mono" style="left:645px;top:83.15px;color:#12272e">Request: MESSAGE sip:+918108591527@sip.callwithus.com;transport=UDP |  (text/pla…</div>
<div class="t mono" style="left:25px;top:99.42px;color:#12272e">1459…</div>
<div class="t mono" style="left:76px;top:99.42px;color:#12272e">566.396238</div>
<div class="t mono" style="left:190px;top:99.42px;color:#12272e">208.51.63.146</div>
<div class="t mono" style="left:361px;top:99.42px;color:#12272e">192.168.3.11</div>
<div class="t mono" style="left:531.3px;top:99.42px;color:#12272e">SIP</div>
<div class="t mono" style="right:673px;top:99.42px;color:#12272e">635</div>
<div class="t mono" style="left:645px;top:99.42px;color:#12272e">Status: 202 Accepted |</div>
<div class="t mono" style="left:25px;top:115.69px;color:#12272e">1459…</div>
<div class="t mono" style="left:76px;top:115.69px;color:#12272e">566.818248</div>
<div class="t mono" style="left:190px;top:115.69px;color:#12272e">208.51.63.146</div>
<div class="t mono" style="left:361px;top:115.69px;color:#12272e">192.168.3.11</div>
<div class="t mono" style="left:531.3px;top:115.69px;color:#12272e">SIP</div>
<div class="t mono" style="right:673px;top:115.69px;color:#12272e">635</div>
<div class="t mono" style="left:645px;top:115.69px;color:#12272e">Status: 202 Accepted |</div>
<div class="t mono" style="left:25px;top:131.96px;color:#12272e">1459…</div>
<div class="t mono" style="left:76px;top:131.96px;color:#12272e">566.828391</div>
<div class="t mono" style="left:190px;top:131.96px;color:#12272e">208.51.63.146</div>
<div class="t mono" style="left:361px;top:131.96px;color:#12272e">192.168.3.11</div>
<div class="t mono" style="left:531.3px;top:131.96px;color:#12272e">SIP</div>
<div class="t mono" style="right:673px;top:131.96px;color:#12272e">635</div>
<div class="t mono" style="left:645px;top:131.96px;color:#12272e">Status: 202 Accepted |</div>
<div class="a" style="left:8px;top:0;width:1.5px;height:141px;background:#a3b0bb"></div>
<svg class="a" style="left:9px;top:37.54px" width="9" height="6" viewBox="0 0 9 6"><path d="M0 .5 4 3 0 5.500zM4 .5 8.500 3 4 5.500z" fill="#8b9298"/></svg>
</div>
<div class="a" style="left:1313px;top:229px;width:1px;height:160px;background:#aaa6a2"></div>
<div class="a" style="left:1314px;top:229px;width:33px;height:160px;background:#daeeff"></div>
<div class="a" style="left:1314px;top:233px;width:33px;height:1px;background:#308cc6"></div>
<div class="a" style="left:1347px;top:229px;width:1px;height:160px;background:#aaa6a2"></div>
<div class="a" style="left:1347.5px;top:229px;width:13.5px;height:160px;background:#e5e3e1;border-left:1px solid #c2beb9;border-right:1px solid #c2beb9"></div>
<div class="a" style="left:1348.5px;top:229px;width:11.5px;height:12px;background:#f8f6f5;border-bottom:1px solid #c5c1bc"></div>
<svg class="a" style="left:1350.0px;top:232.5px" width="9" height="6" viewBox="0 0 9 6"><path d="M4.500 .3 8.700 5.500H.3z" fill="#4a4a4a"/></svg>
<div class="a" style="left:1348.5px;top:377px;width:11.5px;height:12px;background:#f8f6f5;border-top:1px solid #c5c1bc"></div>
<svg class="a" style="left:1350.0px;top:380.5px" width="9" height="6" viewBox="0 0 9 6"><path d="M.3.500h8.400L4.500 5.700z" fill="#4a4a4a"/></svg>
<div class="a" style="left:1348.5px;top:241px;width:11.5px;height:25px;background:linear-gradient(90deg,#fdfcfb,#f3f0ee);border-top:1px solid #c5c1bc;border-bottom:1px solid #c5c1bc"></div>
<div class="a" style="left:0px;top:389px;width:1361px;height:6px;background:#efebe7;border-top:1px solid #b9b5b0;border-bottom:1px solid #c9c5c0"></div>
<div class="a" style="left:0px;top:395px;width:1348px;height:159px;background:#fff"></div>
<div class="a" style="left:18.3px;top:395px;width:1329.7px;height:130.2px;background:#efebe7"></div>
<div class="a" style="left:0px;top:395px;width:1348px;height:159px;overflow:hidden">
<svg class="a" style="left:6.6px;top:2.30px" width="6" height="10" viewBox="0 0 6 10"><path d="M.3.500 5.200 5 .3 9.500z" fill="#3a3a3a"/></svg>
<div class="t mono" style="left:21px;top:1.30px;color:#1b1b1b">Frame 145937: 969 bytes on wire (7752 bits), 969 bytes captured (7752 bits)</div>
<svg class="a" style="left:6.6px;top:18.57px" width="6" height="10" viewBox="0 0 6 10"><path d="M.3.500 5.200 5 .3 9.500z" fill="#3a3a3a"/></svg>
<div class="t mono" style="left:21px;top:17.57px;color:#1b1b1b">Radiotap Header v0, Length 36</div>
<svg class="a" style="left:6.6px;top:34.84px" width="6" height="10" viewBox="0 0 6 10"><path d="M.3.500 5.200 5 .3 9.500z" fill="#3a3a3a"/></svg>
<div class="t mono" style="left:21px;top:33.84px;color:#1b1b1b">802.11 radio information</div>
<svg class="a" style="left:6.6px;top:51.11px" width="6" height="10" viewBox="0 0 6 10"><path d="M.3.500 5.200 5 .3 9.500z" fill="#3a3a3a"/></svg>
<div class="t mono" style="left:21px;top:50.11px;color:#1b1b1b">IEEE 802.11 Data, Flags: .p.....TC</div>
<svg class="a" style="left:6.6px;top:67.38px" width="6" height="10" viewBox="0 0 6 10"><path d="M.3.500 5.200 5 .3 9.500z" fill="#3a3a3a"/></svg>
<div class="t mono" style="left:21px;top:66.38px;color:#1b1b1b">Logical-Link Control</div>
<svg class="a" style="left:6.6px;top:83.65px" width="6" height="10" viewBox="0 0 6 10"><path d="M.3.500 5.200 5 .3 9.500z" fill="#3a3a3a"/></svg>
<div class="t mono" style="left:21px;top:82.65px;color:#1b1b1b">Internet Protocol Version 4, Src: 192.168.3.11, Dst: 208.51.63.146</div>
<svg class="a" style="left:6.6px;top:99.92px" width="6" height="10" viewBox="0 0 6 10"><path d="M.3.500 5.200 5 .3 9.500z" fill="#3a3a3a"/></svg>
<div class="t mono" style="left:21px;top:98.92px;color:#1b1b1b">User Datagram Protocol, Src Port: 63938, Dst Port: 5060</div>
<svg class="a" style="left:4.5px;top:118.69px" width="9" height="6" viewBox="0 0 9 6"><path d="M.3.300h8.400L4.500 5.700z" fill="#3a3a3a"/></svg>
<div class="t mono" style="left:21px;top:115.19px;color:#1b1b1b">Session Initiation Protocol (MESSAGE)</div>
<svg class="a" style="left:24.6px;top:132.46px" width="6" height="10" viewBox="0 0 6 10"><path d="M.3.500 5.200 5 .3 9.500z" fill="#3a3a3a"/></svg>
<div class="t mono" style="left:39px;top:131.46px;color:#1b1b1b">Request-Line: MESSAGE sip:+918108591527@sip.callwithus.com;transport=UDP SIP/2.0</div>
<svg class="a" style="left:24.6px;top:148.73px" width="6" height="10" viewBox="0 0 6 10"><path d="M.3.500 5.200 5 .3 9.500z" fill="#3a3a3a"/></svg>
<div class="t mono" style="left:39px;top:147.73px;color:#1b1b1b">Message Header</div>
</div>
<div class="a" style="left:1347.5px;top:395px;width:13.5px;height:159px;background:#e5e3e1;border-left:1px solid #c2beb9;border-right:1px solid #c2beb9"></div>
<div class="a" style="left:1348.5px;top:395px;width:11.5px;height:12px;background:#f8f6f5;border-bottom:1px solid #c5c1bc"></div>
<svg class="a" style="left:1350.0px;top:398.5px" width="9" height="6" viewBox="0 0 9 6"><path d="M4.500 .3 8.700 5.500H.3z" fill="#4a4a4a"/></svg>
<div class="a" style="left:1348.5px;top:542px;width:11.5px;height:12px;background:#f8f6f5;border-top:1px solid #c5c1bc"></div>
<svg class="a" style="left:1350.0px;top:545.5px" width="9" height="6" viewBox="0 0 9 6"><path d="M.3.500h8.400L4.500 5.700z" fill="#4a4a4a"/></svg>
<div class="a" style="left:1348.5px;top:406px;width:11.5px;height:110px;background:linear-gradient(90deg,#fdfcfb,#f3f0ee);border-top:1px solid #c5c1bc;border-bottom:1px solid #c5c1bc"></div>
<div class="a" style="left:0px;top:554px;width:1361px;height:6px;background:#efebe7;border-top:1px solid #b9b5b0;border-bottom:1px solid #c9c5c0"></div>
<div class="a" style="left:0px;top:560px;width:1348px;height:135px;background:#fff"></div>
<div class="a" style="left:0px;top:560px;width:49px;height:135px;background:#efebe7"></div>
<div class="t mono" style="left:8.1px;top:561.4px;color:#a3a3a3">0000</div>
<div class="t mono" style="left:57.1px;top:561.4px;color:#1b1b1b">00 00 24 00 2f 40 00 a0  20 08 00 00 00 00 00 00   <span style="color:#8c8c8c">··</span>$<span style="color:#8c8c8c">·</span>/@<span style="color:#8c8c8c">··</span> <span style="color:#8c8c8c">········</span></div>
<div class="t mono" style="left:8.1px;top:576.7099999999999px;color:#a3a3a3">0010</div>
<div class="t mono" style="left:57.1px;top:576.7099999999999px;color:#1b1b1b">25 ef ce 2f 00 00 00 00  10 24 85 09 c0 00 c5 00   %<span style="color:#8c8c8c">··</span>/<span style="color:#8c8c8c">····</span> <span style="color:#8c8c8c">·</span>$<span style="color:#8c8c8c">······</span></div>
<div class="t mono" style="left:8.1px;top:592.02px;color:#a3a3a3">0020</div>
<div class="t mono" style="left:57.1px;top:592.02px;color:#1b1b1b">00 00 c5 00 08 41 30 00  30 b5 c2 11 de 2a 5c 51   <span style="color:#8c8c8c">·····</span>A0<span style="color:#8c8c8c">·</span> 0<span style="color:#8c8c8c">····</span>*\Q</div>
<div class="t mono" style="left:8.1px;top:607.3299999999999px;color:#a3a3a3">0030</div>
<div class="t mono" style="left:57.1px;top:607.3299999999999px;color:#1b1b1b">88 31 a0 3b 30 b5 c2 11  de 2a f0 5b 12 07 00 20   <span style="color:#8c8c8c">·</span>1<span style="color:#8c8c8c">·</span>;0<span style="color:#8c8c8c">···</span> <span style="color:#8c8c8c">·</span>*<span style="color:#8c8c8c">·</span>[<span style="color:#8c8c8c">···</span> </div>
<div class="t mono" style="left:8.1px;top:622.64px;color:#a3a3a3">0040</div>
<div class="t mono" style="left:57.1px;top:622.64px;color:#1b1b1b">00 00 00 00 16 84 6f 75  67 e7 ff fb b1 78 67 98   <span style="color:#8c8c8c">······</span>ou g<span style="color:#8c8c8c">····</span>xg<span style="color:#8c8c8c">·</span></div>
<div class="t mono" style="left:8.1px;top:637.9499999999999px;color:#a3a3a3">0050</div>
<div class="t mono" style="left:57.1px;top:637.9499999999999px;color:#1b1b1b">c1 51 41 bc 39 8b 43 ce  d5 cf da a3 40 0d 04 e7   <span style="color:#8c8c8c">·</span>QA<span style="color:#8c8c8c">·</span>9<span style="color:#8c8c8c">·</span>C<span style="color:#8c8c8c">·</span> <span style="color:#8c8c8c">····</span>@<span style="color:#8c8c8c">···</span></div>
<div class="t mono" style="left:8.1px;top:653.26px;color:#a3a3a3">0060</div>
<div class="t mono" style="left:57.1px;top:653.26px;color:#1b1b1b">b8 2f 93 7e 22 30 d9 4d  2a d9 44 a1 17 46 9b 63   <span style="color:#8c8c8c">·</span>/<span style="color:#8c8c8c">·</span>~&quot;0<span style="color:#8c8c8c">·</span>M *<span style="color:#8c8c8c">·</span>D<span style="color:#8c8c8c">··</span>F<span style="color:#8c8c8c">·</span>c</div>
<div class="t mono" style="left:8.1px;top:668.5699999999999px;color:#a3a3a3">0070</div>
<div class="t mono" style="left:57.1px;top:668.5699999999999px;color:#1b1b1b">4b 06 da e4 d3 4d 1a 93  07 a2 96 03 68 04 77 1d   K<span style="color:#8c8c8c">····</span>M<span style="color:#8c8c8c">··</span> <span style="color:#8c8c8c">····</span>h<span style="color:#8c8c8c">·</span>w<span style="color:#8c8c8c">·</span></div>
<div class="a" style="left:1347.5px;top:560px;width:13.5px;height:135px;background:#e5e3e1;border-left:1px solid #c2beb9;border-right:1px solid #c2beb9"></div>
<div class="a" style="left:1348.5px;top:560px;width:11.5px;height:12px;background:#f8f6f5;border-bottom:1px solid #c5c1bc"></div>
<svg class="a" style="left:1350.0px;top:563.5px" width="9" height="6" viewBox="0 0 9 6"><path d="M4.500 .3 8.700 5.500H.3z" fill="#4a4a4a"/></svg>
<div class="a" style="left:1348.5px;top:683px;width:11.5px;height:12px;background:#f8f6f5;border-top:1px solid #c5c1bc"></div>
<svg class="a" style="left:1350.0px;top:686.5px" width="9" height="6" viewBox="0 0 9 6"><path d="M.3.500h8.400L4.500 5.700z" fill="#4a4a4a"/></svg>
<div class="a" style="left:1348.5px;top:572px;width:11.5px;height:26px;background:linear-gradient(90deg,#fdfcfb,#f3f0ee);border-top:1px solid #c5c1bc;border-bottom:1px solid #c5c1bc"></div>
<div class="a" style="left:0px;top:695px;width:1361px;height:1px;background:#b9b5b0"></div>
<div class="a" style="left:0px;top:696px;width:1361px;height:25px;background:#efebe7"></div>
<div class="a" style="left:1px;top:696px;width:146px;height:24px;background:#fff;border:1px solid #c9c5c0;border-top:none;border-radius:0 0 3px 3px"></div>
<div class="a" style="left:147px;top:696px;width:252px;height:23px;background:#f4f0ee;border:1px solid #c9c5c0;border-top:none;border-radius:0 0 3px 3px"></div>
<div class="t dv" style="left:10.5px;top:701.7px;font-size:13.56px">Frame (969 bytes)</div>
<div class="t dv" style="left:158px;top:700.7px;font-size:13.56px">Decrypted CCMP data (889 bytes)</div>
<div class="a" style="left:0px;top:721px;width:1361px;height:22px;background:#efebe7"></div>
<div class="a" style="left:8.2px;top:725.7px;width:13px;height:13px;border-radius:7px;background:radial-gradient(circle at 45% 35%,#f29090,#e45555 75%);border:1px solid #a93838"></div>
<svg class="a" style="left:29px;top:725px" width="14" height="14" viewBox="0 0 14 14"><defs><linearGradient id="edp" x1="0" y1="0" x2="0" y2="1"><stop offset="0" stop-color="#2f9be6"/><stop offset=".32" stop-color="#bfe0f6"/><stop offset=".4" stop-color="#fbfbfb"/><stop offset="1" stop-color="#f1f1ef"/></linearGradient></defs><rect x=".8" y="1" width="9.800" height="12.300" fill="url(#edp)" stroke="#d5d8dc" stroke-width=".6"/><path d="M2.500 7h3M2.500 9.300h5.500M2.500 11.500h5.500" stroke="#d0d4d8" stroke-width=".8"/><path d="M12.300 1.800 5.200 8.600" stroke="#3c3c3c" stroke-width="1.900" stroke-linecap="round"/><path d="M5.200 8.600 4.200 9.700" stroke="#222" stroke-width="1.200" stroke-linecap="round"/><path d="M12.300 1.800 12.900 1.200" stroke="#999" stroke-width="1.900" stroke-linecap="round"/></svg>
<div class="t dv" style="left:57.7px;top:726.4px;font-size:13.56px">Private-investigator.pcap</div>
<div class="a" style="left:864px;top:727px;width:1px;height:14px;background:repeating-linear-gradient(180deg,#c9c5c0 0 1px,transparent 1px 3px)"></div>
<div class="a" style="left:1241px;top:727px;width:1px;height:14px;background:repeating-linear-gradient(180deg,#c9c5c0 0 1px,transparent 1px 3px)"></div>
<div class="t dv" style="left:877px;top:726.7px;font-size:13.56px">Packets: 149984 · Displayed: 882 (0.6%)</div>
<div class="t dv" style="left:1254px;top:726.7px;font-size:13.56px">Profile: Default</div>
<div class="a" style="left:0px;top:743px;width:1361px;height:28px;background:#1b1f1d"></div>
<div class="a" style="left:99px;top:745px;width:357px;height:26px;background:#424441;border-bottom:2px solid #e05a1c;border-radius:2px 2px 0 0"></div>
<svg class="a" style="left:103px;top:748px" width="20" height="20" viewBox="0 0 20 20"><path d="M1 18.500C3 9 9 3 18.500 1 16.500 6 16.500 12 18.500 18.500z" fill="url(#fin)"/><path d="M1 18.500c.3-1 .6-2 1-3 5-.8 10-.8 16 0l.5 3z" fill="#6fa8f0" opacity=".55"/></svg>
<div class="t dv" style="left:126px;top:751.6px;font-size:13.56px;color:#fff">Private-investigator.pcap</div>
<div class="t dv" style="left:488px;top:751.6px;font-size:13.56px;color:#fff">student@attackdefense: ~/Desktop</div>
<div class="a" style="left:466px;top:749px;width:16.8px;height:13px;background:linear-gradient(135deg,#3a3a3a 0,#111 55%,#2a2a2a 100%);border:1.500px solid #c6c6c6;border-radius:1.500px"></div>
<div class="a" style="left:460px;top:769px;width:357px;height:2px;background:#4b4d4b"></div>
<div class="a" style="left:470px;top:763px;width:9px;height:3px;background:#e6e6e6;border-radius:50%"></div>
<svg class="a" style="left:3px;top:747px" width="22" height="22" viewBox="0 0 22 22"><path d="M20.500 3.800 14.500 3.200c-1.800-1.200-4-.6-4.800 1.200-.6 1.500.2 3 1.600 4.300 1.800 1.700 2.700 3.400 2.200 5.300-.5 1.900-2.300 3.200-5.500 3.700l-1 2.300" fill="none" stroke="#ededed" stroke-width="1.500" stroke-linecap="round" stroke-linejoin="round"/><path d="M9.800 5.500C7 3.300 4.200 2.800 1.800 3.600c.6 2.800 2.200 5.200 5 6.600 1.700.9 3.300 1 4.500.5" fill="none" stroke="#ededed" stroke-width="1.500" stroke-linecap="round" stroke-linejoin="round"/><path d="M3.200 5.500c1.300 2 3 3.300 5.200 4" fill="none" stroke="#ededed" stroke-width="1" stroke-linecap="round"/></svg>
<svg class="a" style="left:37px;top:748px" width="18" height="19" viewBox="0 0 18 19"><defs><linearGradient id="ffx" x1=".85" y1=".1" x2=".2" y2=".95"><stop offset="0" stop-color="#fff36b"/><stop offset=".3" stop-color="#ffb02e"/><stop offset=".65" stop-color="#ff5a2a"/><stop offset="1" stop-color="#e31587"/></linearGradient><radialGradient id="ffp" cx=".5" cy=".5" r=".5"><stop offset="0" stop-color="#9059ff"/><stop offset="1" stop-color="#6e2bd1"/></radialGradient></defs><path d="M10.500 1c1.200 1 1.600 2.300 1.500 3.500 2.500 1 4.500 3.300 4.500 6.500a7.500 7.500 0 1 1-15 0c0-2 .7-3.700 1.800-4.800.1 1 .5 1.700 1.200 2.100C4.500 5.800 6 3.800 8.500 3.500 9.500 3 10.200 2 10.500 1z" fill="url(#ffx)"/><circle cx="8.300" cy="10.300" r="3.600" fill="url(#ffp)"/><path d="M5 8.500c1.500-.8 3.500-.6 4.800.6 1.600 1.500 1.500 3.800.2 5.200 3-.3 4.700-3 3.800-5.800-.8-2.300-3-3.500-5.300-3.200C6.800 5.500 5.500 6.800 5 8.500z" fill="#ff9a2e" opacity=".85"/></svg>
<div class="a" style="left:72.5px;top:751px;width:12.5px;height:13.5px;background:#3d8fe6;border:1px solid #eef3f8;border-radius:3px 3px 1px 1px"></div>
<div class="a" style="left:73.5px;top:751.8px;width:10.5px;height:2.5px;background:#f3f6f9;border-radius:2px 2px 0 0"></div>
<div class="a" style="left:73.5px;top:757.5px;width:10.5px;height:1px;background:#e6eef7"></div>
<div class="a" style="left:76.5px;top:755px;width:4.5px;height:1.5px;background:#f2f6fa"></div>
<div class="a" style="left:76.5px;top:760px;width:4.5px;height:1.5px;background:#f2f6fa"></div>
<div class="t dv" style="left:1245px;top:751.6px;font-size:13.56px;color:#fff;font-weight:bold">1</div>
<div class="a" style="left:1238px;top:769px;width:23px;height:2px;background:#e05a1c"></div>
<div class="t dv" style="left:1269px;top:751.6px;font-size:13.56px;color:#fff">2</div>
<div class="t dv" style="left:1293.5px;top:751.6px;font-size:13.56px;color:#fff">3</div>
<div class="t dv" style="left:1318px;top:751.6px;font-size:13.56px;color:#fff">4</div>
<div class="a" style="left:1339px;top:751px;width:17px;height:13px;background:linear-gradient(135deg,#1c4f8f,#3d8be0 60%,#163a66)"></div>
</div>
</body></html>
